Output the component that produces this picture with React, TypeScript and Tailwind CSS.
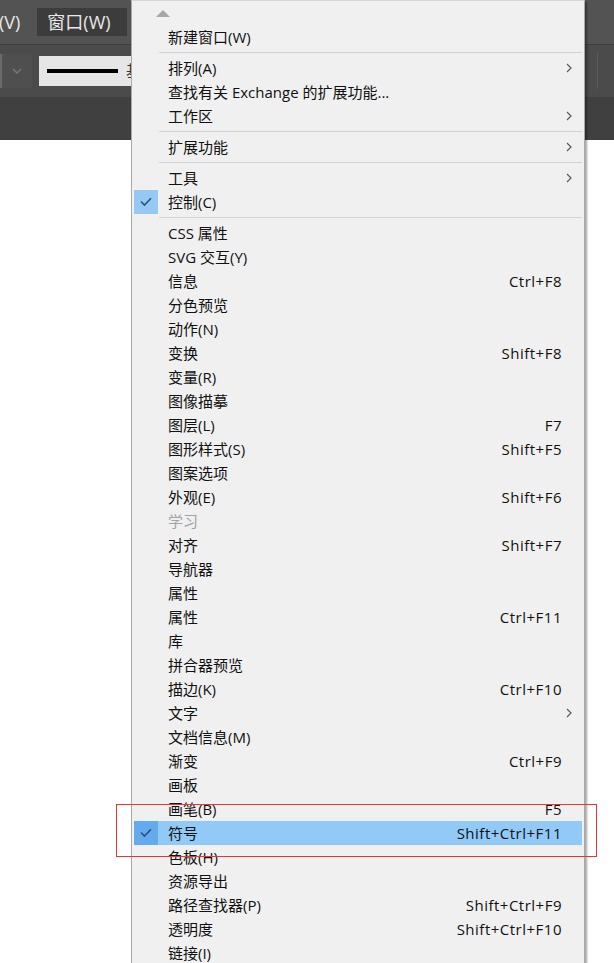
import React from 'react';

type Entry =
  | 'sep'
  | {
      label: string;
      shortcut?: string;
      sub?: boolean;
      checked?: boolean;
      disabled?: boolean;
      active?: boolean;
    };

const entries: Entry[] = [
  { label: '新建窗口(W)' },
  'sep',
  { label: '排列(A)', sub: true },
  { label: '查找有关 Exchange 的扩展功能...' },
  { label: '工作区', sub: true },
  'sep',
  { label: '扩展功能', sub: true },
  'sep',
  { label: '工具', sub: true },
  { label: '控制(C)', checked: true },
  'sep',
  { label: 'CSS 属性' },
  { label: 'SVG 交互(Y)' },
  { label: '信息', shortcut: 'Ctrl+F8' },
  { label: '分色预览' },
  { label: '动作(N)' },
  { label: '变换', shortcut: 'Shift+F8' },
  { label: '变量(R)' },
  { label: '图像描摹' },
  { label: '图层(L)', shortcut: 'F7' },
  { label: '图形样式(S)', shortcut: 'Shift+F5' },
  { label: '图案选项' },
  { label: '外观(E)', shortcut: 'Shift+F6' },
  { label: '学习', disabled: true },
  { label: '对齐', shortcut: 'Shift+F7' },
  { label: '导航器' },
  { label: '属性' },
  { label: '属性', shortcut: 'Ctrl+F11' },
  { label: '库' },
  { label: '拼合器预览' },
  { label: '描边(K)', shortcut: 'Ctrl+F10' },
  { label: '文字', sub: true },
  { label: '文档信息(M)' },
  { label: '渐变', shortcut: 'Ctrl+F9' },
  { label: '画板' },
  { label: '画笔(B)', shortcut: 'F5' },
  { label: '符号', shortcut: 'Shift+Ctrl+F11', checked: true, active: true },
  { label: '色板(H)' },
  { label: '资源导出' },
  { label: '路径查找器(P)', shortcut: 'Shift+Ctrl+F9' },
  { label: '透明度', shortcut: 'Shift+Ctrl+F10' },
  { label: '链接(I)' },
];

function Check() {
  return (
    <svg width="12" height="10" viewBox="0 0 12 10" fill="none">
      <path d="M1 4.5 L4.5 8 L11 1.2" stroke="#2d5079" strokeWidth="1.6" />
    </svg>
  );
}

function Chevron() {
  return (
    <svg width="6" height="10" viewBox="0 0 6 10" fill="none">
      <path d="M1 1 L5 5 L1 9" stroke="#5a5a5a" strokeWidth="1.2" />
    </svg>
  );
}

function MenuRow({ e }: { e: Exclude<Entry, 'sep'> }) {
  return (
    <div className={`flex h-[24px] items-center ${e.active ? 'bg-[#91c9f7]' : ''}`}>
      <div
        className={`flex h-full w-[24px] shrink-0 items-center justify-center ${
          e.checked ? (e.active ? 'bg-[#63abee]' : 'bg-[#95c9f4]') : ''
        }`}
      >
        {e.checked && <Check />}
      </div>
      <span className={`ml-[10px] flex-1 whitespace-nowrap ${e.disabled ? 'text-[#a3a3a3]' : 'text-[#111]'}`}>
        {e.label}
      </span>
      {e.shortcut && <span className="tracking-[0.5px] text-[#111]">{e.shortcut}</span>}
      <div className="flex w-[20px] shrink-0 items-center pl-[4px]">{e.sub && <Chevron />}</div>
    </div>
  );
}

export default function App() {
  return (
    <div
      className="relative h-[963px] w-[614px] overflow-hidden bg-white text-[15px]"
      style={{ fontFamily: '"Open Sans", "Noto Sans CJK SC", sans-serif' }}
    >
      {/* app chrome */}
      <div className="flex flex-col">
        <div className="flex h-[44px] items-center bg-[#535353] text-[18px] text-[#e8e8e8]">
          <span className="-ml-[1px]">(V)</span>
          <div className="ml-[17px] flex h-[28px] w-[90px] items-center bg-[#3c3c3c] pl-[10px]">窗口(W)</div>
        </div>
        <div className="h-px bg-[#3d3d3d]" />
        <div className="flex h-[52px] items-center bg-[#4b4b4b]">
          <div className="h-[34px] w-[2px] bg-[#6a6a6a]" />
          <div className="flex h-[34px] w-[30px] items-center justify-center bg-[#4f4f4f]">
            <svg width="10" height="6" viewBox="0 0 10 6" fill="none">
              <path d="M1 1 L5 5 L9 1" stroke="#7a7a7a" strokeWidth="1.3" />
            </svg>
          </div>
          <div className="ml-[7px] flex h-[30px] w-[93px] shrink-0 items-center overflow-hidden whitespace-nowrap bg-[#e6e6e6] pl-[8px]">
            <div className="h-[4px] w-[71px] shrink-0 bg-black" />
            <span className="ml-[8px] text-[16px] text-[#333]">基</span>
          </div>
          <div className="ml-auto mr-[16px] h-[36px] w-px bg-[#5c5c5c]" />
        </div>
        <div className="h-[43px] bg-[#404040]" />
      </div>

      {/* window menu */}
      <div className="absolute left-[131px] top-0 flex h-[980px] w-[454px] flex-col border border-[#a9a9a9] border-t-[#d6d6d6] bg-[#f0f0f0] px-[2px] shadow-[2px_2px_2px_rgba(0,0,0,0.35)]">
        <div className="flex h-[24px] shrink-0 items-start pl-[22px] pt-[9px]">
          <svg width="14" height="7" viewBox="0 0 14 7">
            <path d="M0 7 L7 0 L14 7 Z" fill="#a6a6a6" />
          </svg>
        </div>
        {entries.map((e, i) =>
          e === 'sep' ? (
            <div key={i} className="flex h-[7px] shrink-0 items-center pl-[25px]">
              <div className="h-px flex-1 bg-[#d2d2d2]" />
            </div>
          ) : (
            <MenuRow key={i} e={e} />
          )
        )}
      </div>

      {/* red annotation */}
      <div className="absolute left-[116px] top-[804px] h-[53px] w-[481px] border border-[#e0393b]" />
    </div>
  );
}
